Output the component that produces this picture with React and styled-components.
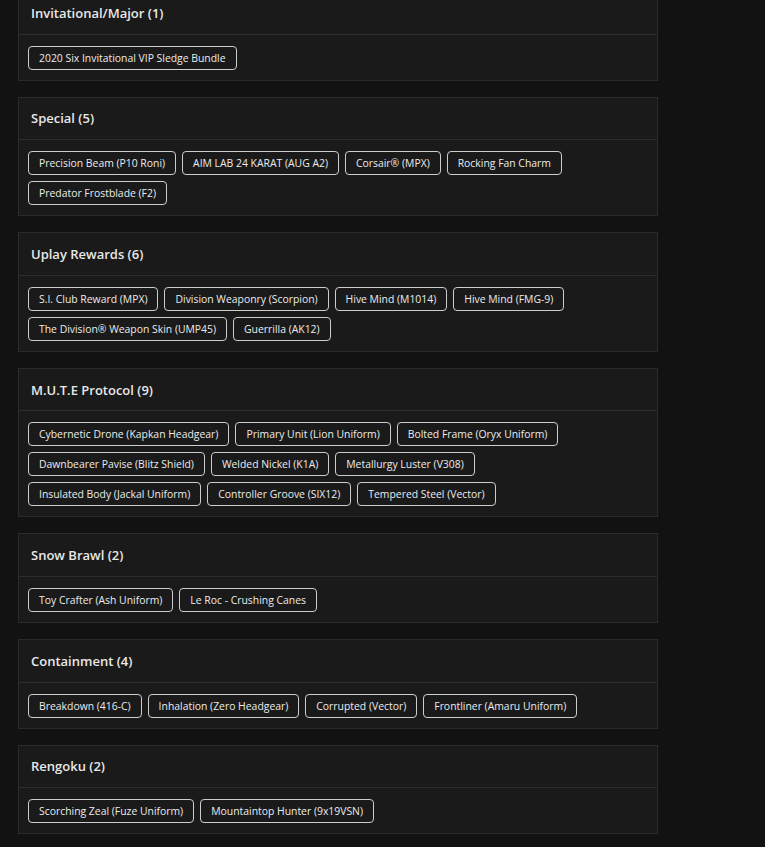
import React from "react";
import styled, { createGlobalStyle } from "styled-components";

const GlobalStyle = createGlobalStyle`
    html, body {
        margin : 0;
        padding : 0;
        background-color : #121212;
    }
    body {
        font-family : "Open Sans", "Liberation Sans", sans-serif;
        color : #e6e6e6;
    }
`;

const collections = [
    { name: 'Invitational/Major', items: ['2020 Six Invitational VIP Sledge Bundle'] },
    {
        name: 'Special',
        items: ['Precision Beam (P10 Roni)', 'AIM LAB 24 KARAT (AUG A2)', 'Corsair® (MPX)', 'Rocking Fan Charm', 'Predator Frostblade (F2)'],
    },
    {
        name: 'Uplay Rewards',
        items: ['S.I. Club Reward (MPX)', 'Division Weaponry (Scorpion)', 'Hive Mind (M1014)', 'Hive Mind (FMG-9)', 'The Division® Weapon Skin (UMP45)', 'Guerrilla (AK12)'],
    },
    {
        name: 'M.U.T.E Protocol',
        items: [
            'Cybernetic Drone (Kapkan Headgear)', 'Primary Unit (Lion Uniform)', 'Bolted Frame (Oryx Uniform)',
            'Dawnbearer Pavise (Blitz Shield)', 'Welded Nickel (K1A)', 'Metallurgy Luster (V308)',
            'Insulated Body (Jackal Uniform)', 'Controller Groove (SIX12)', 'Tempered Steel (Vector)',
        ],
    },
    { name: 'Snow Brawl', items: ['Toy Crafter (Ash Uniform)', 'Le Roc - Crushing Canes'] },
    { name: 'Containment', items: ['Breakdown (416-C)', 'Inhalation (Zero Headgear)', 'Corrupted (Vector)', 'Frontliner (Amaru Uniform)'] },
    { name: 'Rengoku', items: ['Scorching Zeal (Fuze Uniform)', 'Mountaintop Hunter (9x19VSN)'] },
];

const App = () => {
    return (
        <>
            <GlobalStyle />
            <Page>
                {collections.map((c) => (
                    <Card key={c.name}>
                        <CardHeader>{c.name} ({c.items.length})</CardHeader>
                        <ChipList>
                            {c.items.map((item) => (
                                <Chip key={item}>{item}</Chip>
                            ))}
                        </ChipList>
                    </Card>
                ))}
            </Page>
        </>
    );
};

const Page = styled.div`
    width : 640px;
    margin : -9px 0 0 18px;
    display : flex;
    flex-direction : column;
    gap : 16px;
    padding-bottom : 20px;
`;

const Card = styled.section`
    background-color : #1a1a1a;
    border : 1px solid #2b2b2b;
`;

const CardHeader = styled.div`
    height : 41.6px;
    padding : 0 12px;
    display : flex;
    align-items : center;
    font-size : 13px;
    font-weight : 600;
    color : #e8e8e8;
    border-bottom : 1px solid #2d2d2d;
`;

const ChipList = styled.div`
    display : flex;
    flex-wrap : wrap;
    gap : 6px;
    padding : 11px 9px 10px;
`;

const Chip = styled.span`
    height : 24px;
    box-sizing : border-box;
    padding : 0 10px;
    display : inline-flex;
    align-items : center;
    font-size : 10.4px;
    color : #ececec;
    border : 1px solid #cdcdcd;
    border-radius : 4px;
    white-space : nowrap;
`;

export default App;
